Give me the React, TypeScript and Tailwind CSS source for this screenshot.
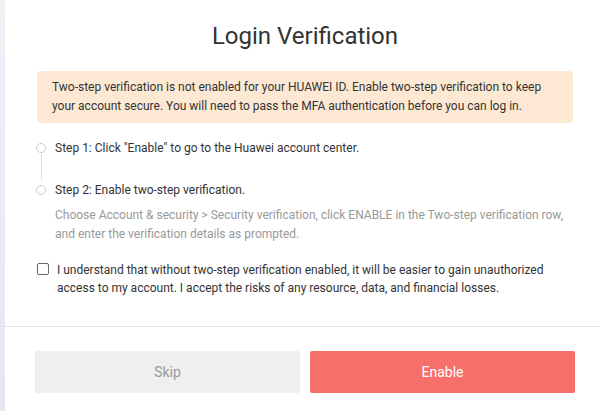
import React, { useState } from 'react';

export default function App() {
  const [agreed, setAgreed] = useState(false);

  return (
    <div className="flex h-[411px] w-[600px] overflow-hidden bg-white" style={{ fontFamily: 'Roboto, "Liberation Sans", sans-serif' }}>
      <div className="w-[5px] shrink-0 bg-gradient-to-b from-[#eef1f6] to-[#e3e8f0]" />
      <div className="flex w-[600px] shrink-0 flex-col">
        <div className="px-[32px] pt-[20px]">
          <h1 className="text-center text-[24px] leading-[32px] text-[#333]">Login Verification</h1>

          <div className="mt-[19px] rounded bg-[#fde9d3] px-[15px] py-[7px] text-[12px] leading-[19px] text-[#333]">
            Two-step verification is not enabled for your HUAWEI ID. Enable two-step verification to keep your account secure. You will need to pass the MFA authentication before you can log in.
          </div>

          <div className="mt-[15px] text-[12px] leading-[20px]">
            <div className="flex h-[42px] gap-[9px]">
              <div className="-ml-px flex w-[10px] shrink-0 flex-col items-center pt-[5px]">
                <span className="h-[10px] w-[10px] rounded-full border border-[#ccc]" />
                <span className="mt-[1px] h-[26px] w-px bg-[#ddd]" />
              </div>
              <div className="text-[#333]">Step 1: Click "Enable" to go to the Huawei account center.</div>
            </div>
            <div className="flex gap-[9px]">
              <div className="-ml-px flex w-[10px] shrink-0 flex-col items-center pt-[5px]">
                <span className="h-[10px] w-[10px] rounded-full border border-[#ccc]" />
              </div>
              <div>
                <div className="text-[#333]">Step 2: Enable two-step verification.</div>
                <div className="mt-[6px] leading-[19px] text-[#999]">
                  Choose Account &amp; security &gt; Security verification, click ENABLE in the Two-step verification row, and enter the verification details as prompted.
                </div>
              </div>
            </div>
          </div>

          <label className="mt-[17px] flex cursor-pointer gap-[8px] text-[12px] leading-[18px] text-[#333]">
            <input
              type="checkbox"
              checked={agreed}
              onChange={(e) => setAgreed(e.target.checked)}
              className="mt-[2px] h-[12px] w-[12px] shrink-0 appearance-none rounded-[2px] border border-[#666] bg-white checked:bg-[#f66f6a]"
            />
            <span>
              I understand that without two-step verification enabled, it will be easier to gain unauthorized access to my account. I accept the risks of any resource, data, and financial losses.
            </span>
          </label>
        </div>

        <div className="mt-auto border-t border-[#e0e0e0] px-[30px] pb-[18px] pt-[24px]">
          <div className="flex gap-[10px]">
            <button className="h-[42px] flex-1 rounded-[2px] bg-[#efefef] text-[14px] text-[#999]">Skip</button>
            <button className="h-[42px] flex-1 rounded-[2px] bg-[#f66f6a] text-[14px] text-white">Enable</button>
          </div>
        </div>
      </div>
    </div>
  );
}
